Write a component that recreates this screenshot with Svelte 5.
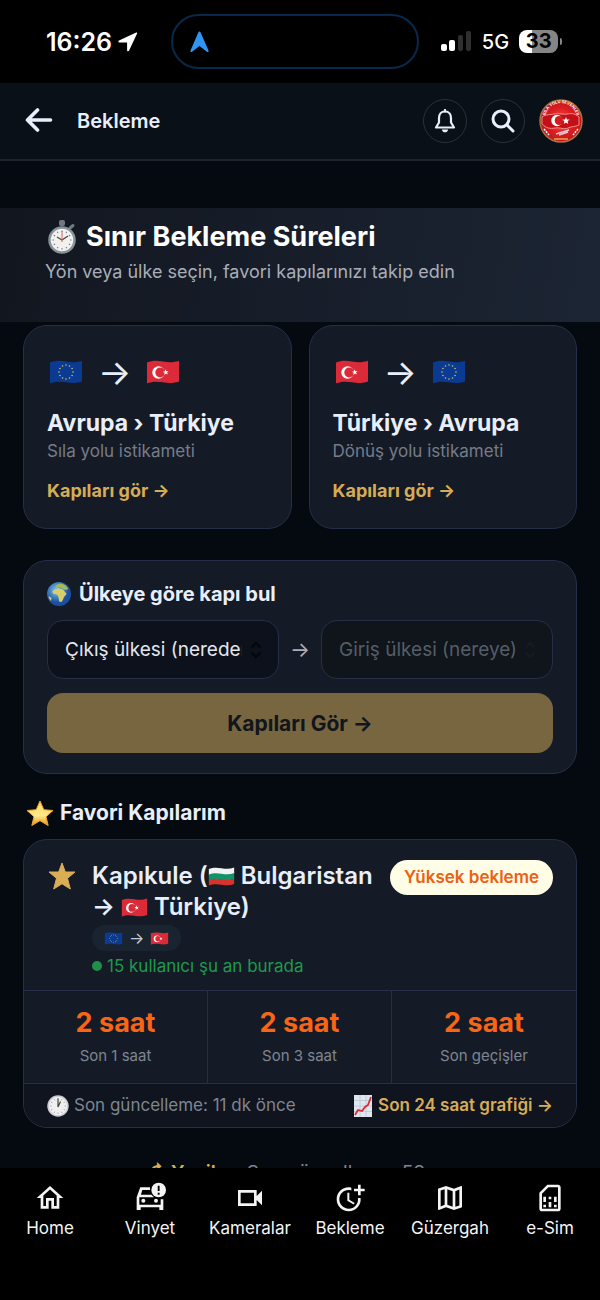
<script>
  const directions = [
    { from: 'eu', to: 'tr', title: 'Avrupa › Türkiye', sub: 'Sıla yolu istikameti' },
    { from: 'tr', to: 'eu', title: 'Türkiye › Avrupa', sub: 'Dönüş yolu istikameti' }
  ]

  const stats = [
    { value: '2 saat', label: 'Son 1 saat' },
    { value: '2 saat', label: 'Son 3 saat' },
    { value: '2 saat', label: 'Son geçişler' }
  ]

  const tabs = [
    { label: 'Home', icon: 'M12 5.69l5 4.5V18h-2v-6H9v6H7v-7.81l5-4.5M12 3L2 12h3v8h6v-6h2v6h6v-8h3L12 3z' },
    { label: 'Vinyet', icon: 'car' },
    { label: 'Kameralar', icon: 'M15 8v8H5V8h10m2-2H3v12h14v-4.5l4 4v-11l-4 4V6z' },
    { label: 'Bekleme', icon: 'M10 8v6l4.7 2.9.8-1.2-4-2.4V8zM17.92 12A6.957 6.957 0 0 1 11 20c-3.9 0-7-3.1-7-7s3.1-7 7-7c.7 0 1.37.1 2 .29V4.23c-.64-.15-1.31-.23-2-.23-5 0-9 4-9 9s4 9 9 9a8.963 8.963 0 0 0 8.94-10h-2.02zM20 5V2h-2v3h-3v2h3v3h2V7h3V5z' },
    { label: 'Güzergah', icon: 'M20.5 3l-.16.03L15 5.1 9 3 3.36 4.9c-.21.07-.36.25-.36.48V20.5c0 .28.22.5.5.5l.16-.03L9 18.9l6 2.1 5.64-1.9c.21-.07.36-.25.36-.48V3.5c0-.28-.22-.5-.5-.5zM10 5.47l4 1.4v11.66l-4-1.4V5.47zm-5 .99l3-1.01v11.7l-3 1.16V6.46zm14 11.08l-3 1.01V6.86l3-1.16v11.84z' },
    { label: 'e-Sim', icon: 'M18 2h-8L4 8v12c0 1.1.9 2 2 2h12c1.1 0 2-.9 2-2V4c0-1.1-.9-2-2-2zm0 2v16H6V8.83L10.83 4H18v0zM7 17h2v2H7zM15 17h2v2h-2zM7 11h2v4H7zM11 15h2v4h-2zM11 11h2v2h-2zM15 11h2v4h-2z' }
  ]

  const euStars = Array.from({ length: 12 }, (_, i) => {
    const a = (i * Math.PI) / 6
    return { x: 17 + 7 * Math.sin(a), y: 12 - 7 * Math.cos(a) }
  })

  const ticks = Array.from({ length: 12 }, (_, i) => i * 30)

  let fromCountry = ''
  let toCountry = ''
</script>

{#snippet flag(kind)}
  <svg class="flag" viewBox="0 0 34 24" aria-hidden="true">
    {#if kind === 'eu'}
      <path d="M1 2.5C6 .5 11 .5 17 1.5s11 1 16-.8v20.8c-5 1.8-10 1.8-16 .8s-11-1-16 1z" fill="#0b3a93" />
      {#each euStars as s}
        <circle cx={s.x} cy={s.y} r="0.8" fill="#c9c35a" />
      {/each}
    {:else if kind === 'tr'}
      <path d="M1 2.5C6 .5 11 .5 17 1.5s11 1 16-.8v20.8c-5 1.8-10 1.8-16 .8s-11-1-16 1z" fill="#dc2b38" />
      <circle cx="12.5" cy="12.5" r="6.2" fill="#fff" />
      <circle cx="14.2" cy="12.5" r="4.9" fill="#dc2b38" />
      <path d="M19.5 9.3l.9 2 2.2-.3-1.6 1.5 1 2-2-1-1.6 1.5.3-2.2-2-1 2.2-.4z" fill="#fff" />
    {:else}
      <path d="M1 2.5C6 .5 11 .5 17 1.5s11 1 16-.8v8c-5 1.8-10 1.8-16 .8s-11-1-16 1z" fill="#f2f2f2" />
      <path d="M1 9.5c5-2 10-2 16-1s11 1 16-.8v7.5c-5 1.8-10 1.8-16 .8s-11-1-16 1z" fill="#129468" />
      <path d="M1 16.5c5-2 10-2 16-1s11 1 16-.8v6.8c-5 1.8-10 1.8-16 .8s-11-1-16 1z" fill="#d5332c" />
    {/if}
  </svg>
{/snippet}

{#snippet updown()}
  <svg class="updown" viewBox="0 0 12 18" aria-hidden="true">
    <path d="M1.5 6.5L6 2l4.5 4.5M1.5 11.5L6 16l4.5-4.5" fill="none" stroke="currentColor" stroke-width="2" />
  </svg>
{/snippet}

<div class="screen">
  <div class="status-bar">
    <div class="status-left">
      <span class="clock">16:26</span>
      <svg width="20" height="20" viewBox="0 0 20 20" fill="#fff" aria-hidden="true">
        <path d="M18.2.6L1 8.6c-1 .5-.8 1.9.4 1.9h7.7v7.7c0 1.2 1.5 1.5 2 .4l8-17c.3-.8-.2-1.3-.9-1z" />
      </svg>
    </div>
    <div class="island">
      <svg width="19" height="22" viewBox="0 0 19 22" fill="#2f95f5" aria-hidden="true">
        <path d="M8.4 1.2c.4-1 1.7-1 2.1 0l8 18.3c.5 1.2-.6 2-1.6 1.3L9.5 15l-7.4 5.8C1.1 21.5 0 20.7.5 19.5z" />
      </svg>
    </div>
    <div class="status-right">
      <svg width="31" height="22" viewBox="0 0 31 22" aria-hidden="true">
        <rect x="0" y="13" width="6" height="7" rx="2" fill="#fff" />
        <rect x="8" y="9" width="6" height="11" rx="2" fill="#fff" />
        <rect x="17" y="4" width="5" height="16" rx="2" fill="#2f2f2f" />
        <rect x="25" y="0" width="5" height="20" rx="2" fill="#2f2f2f" />
      </svg>
      <span class="network">5G</span>
      <span class="battery">33</span>
    </div>
  </div>

  <header class="app-bar">
    <button class="back-btn" aria-label="Geri">
      <svg width="28" height="26" viewBox="0 0 28 26" fill="none" stroke="currentColor" stroke-width="3.6" stroke-linecap="round" stroke-linejoin="round">
        <path d="M12.5 2L2.5 12l10 10M2.5 12h23" />
      </svg>
    </button>
    <span class="page-name">Bekleme</span>
    <button class="round-btn" aria-label="Bildirimler">
      <svg width="22" height="24" viewBox="0 0 22 24" fill="none" stroke="currentColor" stroke-width="2.2" stroke-linejoin="round">
        <path d="M11 2.5C7 2.5 5 5.5 5 9v4.5L2 18.5h18l-3-5V9c0-3.5-2-6.5-6-6.5z" />
        <path d="M11 1v1.5" stroke-linecap="round" />
        <path d="M7.8 20.5h6.4c-.5 2-1.7 2.8-3.2 2.8s-2.7-.8-3.2-2.8z" fill="currentColor" stroke="none" />
      </svg>
    </button>
    <button class="round-btn" aria-label="Ara">
      <svg width="24" height="24" viewBox="0 0 24 24" fill="none" stroke="currentColor" stroke-width="3" stroke-linecap="round">
        <circle cx="10" cy="10" r="8" />
        <path d="M16 16l6 6" />
      </svg>
    </button>
    <button class="avatar" aria-label="Profil">
      <svg width="44" height="44" viewBox="0 0 44 44">
        <defs>
          <radialGradient id="avatar-red">
            <stop offset="0" stop-color="#ff5a50" />
            <stop offset="0.6" stop-color="#dc1f22" />
            <stop offset="1" stop-color="#c3161c" />
          </radialGradient>
          <path id="avatar-arc" d="M6 20a16 16 0 0 1 32 0" />
        </defs>
        <circle cx="22" cy="22" r="21" fill="url(#avatar-red)" stroke="#a8733f" stroke-width="1.5" />
        <path d="M3 18c4-3 8-2 12-3s10 1 14 0 8 0 11 3v8c-4 2-7 1-11 3s-8-1-13 0-9 0-13-4z" fill="#c40f17" stroke="#f3aaa5" stroke-width="0.8" />
        <circle cx="18" cy="21.5" r="5.7" fill="#fff" />
        <circle cx="20.2" cy="21.5" r="4.5" fill="#d51a20" />
        <path d="M27 18l1 2.4 2.6.2-2 1.7.6 2.6-2.2-1.4-2.2 1.4.6-2.6-2-1.7 2.6-.2z" fill="#fff" />
        <path d="M17 35l13-4M20 36l9-3" stroke="#e9c9d2" stroke-width="1.5" />
        <path d="M5 30l5 6M39 30l-5 6" stroke="#fff" stroke-width="1.5" stroke-dasharray="2 1" />
        <path d="M15 40h14" stroke="#e8a34c" stroke-width="1.5" />
        <text class="avatar-text"><textPath href="#avatar-arc" startOffset="50%" text-anchor="middle">SILA YOLU SEVENLER</textPath></text>
      </svg>
    </button>
  </header>

  <main>
    <section class="hero">
      <h1>
        <svg width="28" height="34" viewBox="0 0 28 34" aria-hidden="true">
          <rect x="11" y="0" width="6" height="6" rx="2" fill="#6f7b83" />
          <path d="M22 8l3-2.5" stroke="#6f7b83" stroke-width="3" stroke-linecap="round" />
          <circle cx="14" cy="20" r="12.5" fill="#f1f1ef" stroke="#87939a" stroke-width="2.5" />
          {#each ticks as t}
            <path d="M14 10.5v1.5" stroke="#777" stroke-width="1" transform="rotate({t} 14 20)" />
          {/each}
          <path d="M14 20l6-4M14 20l-5-3" stroke="#444" stroke-width="1.2" />
          <path d="M14 22V11" stroke="#e0605c" stroke-width="1" />
        </svg>
        Sınır Bekleme Süreleri
      </h1>
      <p>Yön veya ülke seçin, favori kapılarınızı takip edin</p>
    </section>

    <div class="directions">
      {#each directions as d}
        <a class="card direction" href="#{d.from}-{d.to}">
          <span class="route">
            {@render flag(d.from)}
            <span class="route-arrow">→</span>
            {@render flag(d.to)}
          </span>
          <strong>{d.title}</strong>
          <span class="sub">{d.sub}</span>
          <span class="more">Kapıları gör →</span>
        </a>
      {/each}
    </div>

    <form class="card finder">
      <h2>
        <svg width="24" height="24" viewBox="0 0 24 24" aria-hidden="true">
          <defs>
            <radialGradient id="sea" cx="0.4" cy="0.35">
              <stop offset="0" stop-color="#7fc8f2" />
              <stop offset="1" stop-color="#1c4f9f" />
            </radialGradient>
          </defs>
          <circle cx="12" cy="12" r="12" fill="url(#sea)" />
          <path d="M8 7.5c2-1.5 5-1 7-.5 2 .6 2.5 3 4.5 4.5-.5 2-2.5 2.5-3 4.5s-1.5 4-3 4c-2 0-1.5-3-2-4.5s-.5-2.5-2-3-4-.5-4-2.5 1.5-2 2.5-2.5z" fill="#d9cf6a" />
          <path d="M8 5c1-2 3.5-3.5 6-3.5 3 .5 6 2.5 7.5 5.5-2 .5-3 1.5-4.5.5S14 5 12 5.5 9 6.5 8 5z" fill="#a9b857" />
          <path d="M1.5 14l3 2-.5 3c-1.5-1.5-2.2-3-2.5-5z" fill="#d9cf6a" />
        </svg>
        Ülkeye göre kapı bul
      </h2>
      <div class="selects">
        <div class="select-box">
          <select bind:value={fromCountry} aria-label="Çıkış ülkesi">
            <option value="">Çıkış ülkesi (nereden)</option>
          </select>
          {@render updown()}
        </div>
        <span class="between">→</span>
        <div class="select-box off">
          <select bind:value={toCountry} aria-label="Giriş ülkesi" disabled>
            <option value="">Giriş ülkesi (nereye)</option>
          </select>
          {@render updown()}
        </div>
      </div>
      <button class="find-btn" type="submit" disabled={!fromCountry}>Kapıları Gör →</button>
    </form>

    <h2 class="section-title">
      <svg width="28" height="26" viewBox="0 0 28 26" aria-hidden="true">
        <defs>
          <linearGradient id="gold" x2="0" y2="1">
            <stop offset="0" stop-color="#ffd95c" />
            <stop offset="0.6" stop-color="#ffe98a" />
            <stop offset="1" stop-color="#e88f14" />
          </linearGradient>
        </defs>
        <path d="M14 1l3.8 8.7 9.2.8-7 6.2 2.2 8.8L14 20.7l-8.2 4.8L8 16.7l-7-6.2 9.2-.8z" fill="url(#gold)" stroke="#f0a52c" stroke-width="1" stroke-linejoin="round" />
      </svg>
      Favori Kapılarım
    </h2>

    <article class="card gate">
      <div class="gate-head">
        <button class="fav-btn" aria-label="Favorilerden çıkar">
          <svg width="28" height="28" viewBox="0 0 28 28" fill="currentColor" stroke="currentColor" stroke-width="1" stroke-linejoin="round">
            <path d="M14 1l3.3 9h9.7l-7.5 6.3L22.3 27 14 21.8 5.7 27l2.8-10.7L1 10h9.7z" />
          </svg>
        </button>
        <div class="gate-info">
          <h3>Kapıkule ({@render flag('bg')} Bulgaristan → {@render flag('tr')} Türkiye)</h3>
          <span class="mini-route">{@render flag('eu')} → {@render flag('tr')}</span>
          <span class="users"><i class="dot"></i>15 kullanıcı şu an burada</span>
        </div>
        <span class="level">Yüksek bekleme</span>
      </div>
      <div class="stats">
        {#each stats as s}
          <div class="stat">
            <strong>{s.value}</strong>
            <span>{s.label}</span>
          </div>
        {/each}
      </div>
      <div class="gate-foot">
        <span class="updated">
          <svg width="22" height="22" viewBox="0 0 22 22" aria-hidden="true">
            <circle cx="11" cy="11" r="10" fill="#f0f0f0" stroke="#c9cbd0" stroke-width="1.5" />
            {#each ticks as t}
              <path d="M11 3v1.5" stroke="#999" stroke-width="0.8" transform="rotate({t} 11 11)" />
            {/each}
            <path d="M11 3.5V12l2.5-5.5" fill="none" stroke="#444" stroke-width="1.2" />
          </svg>
          Son güncelleme: 11 dk önce
        </span>
        <a class="chart-link" href="#grafik">
          <svg width="20" height="22" viewBox="0 0 20 22" aria-hidden="true">
            <rect x="1" width="18" height="22" fill="#dfe6ee" />
            <path d="M1 5.5h18M1 11h18M1 16.5h18M7 0v22M13 0v22" stroke="#b8c6d6" stroke-width="0.8" />
            <path d="M2 20l3-5 4 1 3-4 3-2 3-8" fill="none" stroke="#d82c35" stroke-width="1.8" />
          </svg>
          Son 24 saat grafiği →
        </a>
      </div>
    </article>

    <p class="refresh"><button>↻ Yenile</button> <span>Son güncelleme: 59 sn</span></p>
  </main>

  <nav class="tab-bar">
    {#each tabs as tab}
      <a href="#{tab.label}">
        <svg width="32" height="32" viewBox="0 0 24 24" fill="currentColor" aria-hidden="true">
          {#if tab.icon === 'car'}
            <path d="M4.7 4H12v2H6.2L5.2 9.5H13l2 2H4V17h16v-4h2v8h-3v-2H5v2H2v-9.5z" />
            <circle cx="7" cy="14" r="1.5" />
            <circle cx="16.5" cy="14" r="1.5" />
            <circle cx="18.5" cy="6" r="5.5" />
            <path d="M18.5 2.8v4M18.5 8v1.5" stroke="#000" stroke-width="1.4" />
          {:else}
            <path d={tab.icon} />
          {/if}
        </svg>
        {tab.label}
      </a>
    {/each}
  </nav>
</div>

<style>
  :global(body) {
    margin: 0;
    background: #000;
  }

  .screen {
    display: flex;
    flex-direction: column;
    height: 100vh;
    overflow: hidden;
    background: #050910;
    color: #e9eefb;
    font-family: Inter, 'Liberation Sans', sans-serif;
    font-size: 17px;
  }

  .screen :global(*) {
    box-sizing: border-box;
  }

  h1, h2, h3, p {
    margin: 0;
  }

  button {
    padding: 0;
    border: none;
    background: none;
    color: inherit;
    font: inherit;
    cursor: pointer;
  }

  a {
    color: inherit;
    text-decoration: none;
  }

  svg {
    flex: none;
  }

  .status-bar {
    display: grid;
    grid-template-columns: 1fr 248px 1fr;
    align-items: center;
    flex: none;
    height: 83px;
    padding-right: 10px;
    background: #000;
    color: #fff;
  }

  .status-left,
  .status-right {
    display: flex;
    align-items: center;
    justify-content: center;
    gap: 6px;
  }

  .status-left {
    padding-left: 13px;
  }

  .status-right {
    gap: 10px;
    padding-right: 10px;
  }

  .clock {
    font-size: 25px;
    font-weight: 600;
  }

  .network {
    font-size: 20px;
    font-weight: 500;
  }

  .island {
    display: flex;
    align-items: center;
    height: 55px;
    padding-left: 17px;
    border: 2px solid #07294a;
    border-radius: 28px;
  }

  .battery {
    position: relative;
    width: 39px;
    border-radius: 8px;
    background: linear-gradient(90deg, #fff 33%, #858585 33%);
    color: #000;
    font-size: 20px;
    font-weight: 700;
    line-height: 23px;
    text-align: center;
  }

  .battery::after {
    content: '';
    position: absolute;
    top: 8px;
    right: -4px;
    width: 2px;
    height: 7px;
    border-radius: 0 2px 2px 0;
    background: #858585;
  }

  .app-bar {
    display: flex;
    align-items: center;
    gap: 14px;
    flex: none;
    height: 78px;
    padding: 0 17px 0 25px;
    border-bottom: 2px solid #1c242e;
    background: #091018;
  }

  .back-btn {
    display: flex;
  }

  .page-name {
    flex: 1;
    padding-left: 10px;
    font-size: 20px;
    font-weight: 600;
  }

  .round-btn {
    display: flex;
    align-items: center;
    justify-content: center;
    width: 44px;
    height: 44px;
    border: 1px solid #2a313a;
    border-radius: 50%;
  }

  .avatar {
    display: flex;
  }

  .avatar-text {
    fill: #fff;
    font-size: 4px;
    font-weight: 700;
  }

  main {
    flex: 1;
    min-height: 0;
    padding-top: 47px;
    overflow: hidden;
  }

  .hero {
    padding: 10px 45px 38px;
    background: linear-gradient(100deg, #12161f, #1c2534);
  }

  .hero h1 {
    display: flex;
    align-items: center;
    gap: 10px;
    padding-left: 3px;
    color: #fff;
    font-size: 27px;
    font-weight: 700;
    line-height: 38px;
  }

  .hero p {
    padding-top: 4px;
    color: #a9aeb8;
    font-size: 18px;
    line-height: 24px;
  }

  .card {
    margin: 0 23px;
    border: 1px solid #262f47;
    border-radius: 24px;
    background: #141b26;
  }

  .directions {
    display: grid;
    grid-template-columns: 1fr 1fr;
    gap: 17px;
    margin: 3px 23px 0;
  }

  .direction {
    display: flex;
    flex-direction: column;
    margin: 0;
    padding: 23px 23px 25px;
  }

  .route {
    display: flex;
    align-items: center;
    gap: 15px;
    padding-left: 2px;
    height: 46px;
  }

  .flag {
    width: 34px;
    height: 24px;
  }

  .route-arrow {
    font-size: 35px;
    line-height: 36px;
  }

  .direction strong {
    padding-top: 12px;
    font-size: 23px;
    font-weight: 700;
    line-height: 32px;
  }

  .sub {
    color: #767c88;
    line-height: 24px;
  }

  .more {
    padding-top: 16px;
    color: #d6ac55;
    font-size: 18px;
    font-weight: 700;
    line-height: 24px;
  }

  .finder {
    margin-top: 31px;
    padding: 20px 23px;
  }

  h2 {
    display: flex;
    align-items: center;
    gap: 8px;
    font-size: 20px;
    font-weight: 700;
    line-height: 26px;
  }

  .selects {
    display: flex;
    align-items: center;
    gap: 11px;
    margin: 13px 0 14px;
  }

  .select-box {
    position: relative;
    flex: 1;
    min-width: 0;
  }

  select {
    display: block;
    width: 100%;
    height: 59px;
    padding: 0 36px 0 17px;
    border: 1px solid #262f47;
    border-radius: 16px;
    appearance: none;
    background: #0c111b;
    color: #e2e6ee;
    font: inherit;
    font-size: 19px;
  }

  select:disabled {
    background: #0f151b;
    color: #555d66;
    opacity: 1;
  }

  .updown {
    position: absolute;
    top: 21px;
    right: 17px;
    width: 12px;
    height: 18px;
    color: #04060a;
    pointer-events: none;
  }

  .off .updown {
    color: #151c20;
  }

  .between {
    color: #a9aeb8;
    font-size: 21px;
  }

  .find-btn {
    display: block;
    width: 100%;
    height: 60px;
    border-radius: 16px;
    background: #776640;
    color: #11151c;
    font-size: 21px;
    font-weight: 700;
  }

  .section-title {
    margin: 26px 26px 13px;
    gap: 6px;
    font-size: 21px;
  }

  .gate {
    overflow: hidden;
  }

  .gate-head {
    display: flex;
    align-items: flex-start;
    gap: 8px;
    padding: 20px 23px 11px 24px;
  }

  .fav-btn {
    display: flex;
    padding: 2px 8px 0 0;
    color: #d9ae55;
  }

  .gate-info {
    display: flex;
    flex: 1;
    flex-direction: column;
    align-items: flex-start;
    min-width: 0;
  }

  h3 {
    font-size: 24px;
    font-weight: 600;
    line-height: 31px;
  }

  h3 :global(.flag) {
    width: 27px;
    height: 19px;
    vertical-align: -2px;
  }

  .mini-route {
    display: flex;
    align-items: center;
    gap: 6px;
    height: 26px;
    margin-top: 3px;
    padding: 0 12px;
    border-radius: 13px;
    background: #1a2431;
    color: #c5cbd6;
    font-size: 16px;
  }

  .mini-route :global(.flag) {
    width: 19px;
    height: 13px;
  }

  .users {
    display: flex;
    align-items: center;
    gap: 5px;
    padding-top: 2px;
    color: #1f9a4c;
    line-height: 26px;
  }

  .dot {
    width: 10px;
    height: 10px;
    border-radius: 50%;
    background: #1f8f4a;
  }

  .level {
    flex: none;
    padding: 0 14px;
    border-radius: 18px;
    background: #fffde6;
    color: #ec6114;
    font-weight: 600;
    line-height: 35px;
    white-space: nowrap;
  }

  .stats {
    display: grid;
    grid-template-columns: repeat(3, 1fr);
    border-top: 1px solid #262f47;
    border-bottom: 1px solid #262f47;
  }

  .stat {
    display: flex;
    flex-direction: column;
    align-items: center;
    padding: 15px 0;
    border-right: 1px solid #262f47;
    color: #7f8591;
    font-size: 15px;
    line-height: 24px;
  }

  .stat:last-child {
    border-right: none;
  }

  .stat strong {
    padding-bottom: 4px;
    color: #fa6414;
    font-size: 27px;
    font-weight: 700;
    line-height: 34px;
  }

  .gate-foot {
    display: flex;
    align-items: center;
    justify-content: space-between;
    padding: 0 23px;
    background: #0f141e;
    line-height: 43px;
  }

  .updated,
  .chart-link {
    display: flex;
    align-items: center;
    gap: 5px;
    color: #7f8591;
  }

  .chart-link {
    color: #d6ac55;
    font-weight: 600;
  }

  .refresh {
    display: flex;
    justify-content: center;
    gap: 20px;
    padding-top: 33px;
    color: #7f8591;
    font-size: 19px;
    line-height: 24px;
  }

  .refresh button {
    color: #d6ac55;
    font-weight: 600;
  }

  .tab-bar {
    display: grid;
    grid-template-columns: repeat(6, 1fr);
    flex: none;
    height: 132px;
    padding-top: 14px;
    background: #000;
    color: #f4f4f4;
  }

  .tab-bar a {
    display: flex;
    flex-direction: column;
    align-items: center;
    line-height: 28px;
  }
</style>
